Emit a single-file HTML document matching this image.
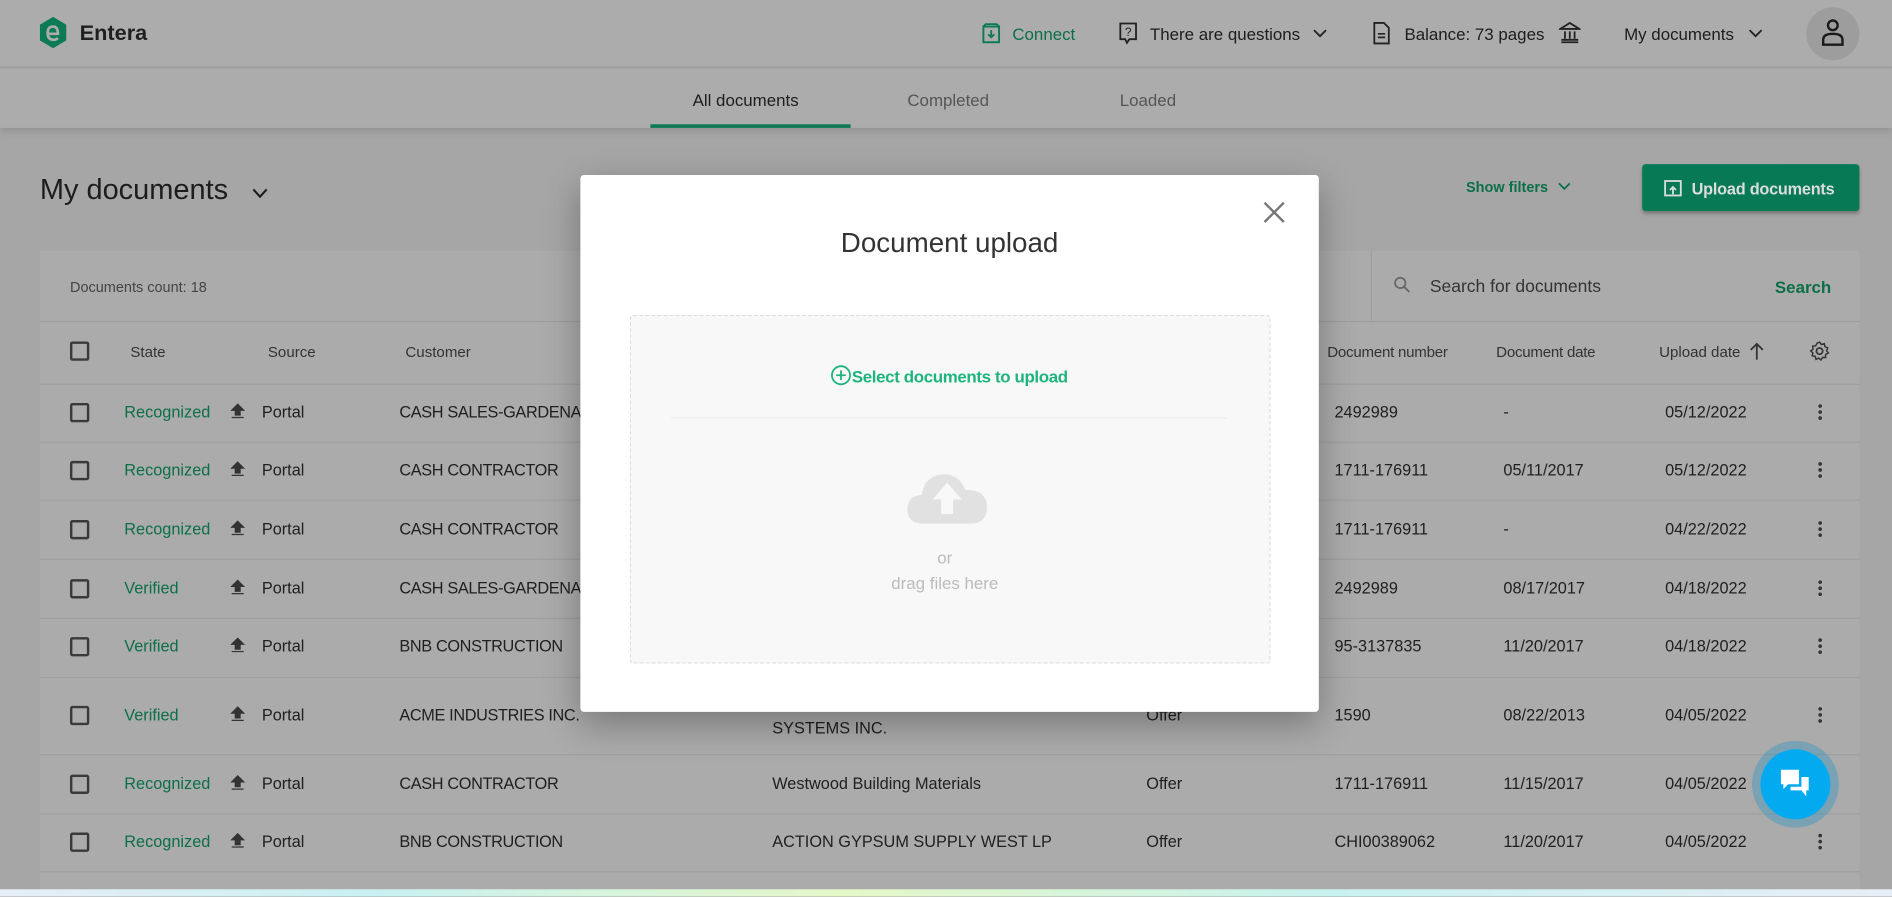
<!DOCTYPE html>
<html><head><meta charset="utf-8">
<style>
*{box-sizing:border-box;margin:0;padding:0}
html,body{width:1892px;height:897px;overflow:hidden;background:#a6a6a6;font-family:"Liberation Sans",sans-serif}
#w{position:absolute;left:0;top:0;width:1568px;height:743px;transform:scale(1.2066);transform-origin:0 0;background:#a6a6a6}
.a{position:absolute;white-space:nowrap}
.top{position:absolute;left:0;top:0;width:1568px;height:56px;background:#acacac;border-bottom:1px solid #9f9f9f}
.tabs{position:absolute;left:0;top:57px;width:1568px;height:49px;background:#acacac;box-shadow:0 3px 6px rgba(0,0,0,.12)}
.t14{font-size:14px;color:#1d1d1d}
.card{position:absolute;left:33px;top:208px;width:1508px;height:535px;background:#ababab}
.line{position:absolute;left:33px;width:1508px;height:1px;background:#9e9e9e}
.cb{position:absolute;left:58px;width:16px;height:16px;border:2px solid #3a3a3a;border-radius:2px}
.row{font-size:13.5px;color:#1f1f1f}
.g{color:#0c6f49}
.hd{font-size:12.5px;color:#333}
.dots{position:absolute;left:1507px;width:3px}
.dots i{display:block;width:3px;height:3px;border-radius:50%;background:#333;margin-bottom:2px}
</style></head><body><div id="w">
<div class="top"></div>
<svg class="a" style="left:33px;top:14px" width="22" height="26" viewBox="0 0 22 26"><path d="M11 0 L22 6.5 V19.5 L11 26 L0 19.5 V6.5Z" fill="#0b7a55"/><path d="M7 14 H15 Q15 8 11 8 Q6.5 8 6.5 13.5 Q6.5 19 11.5 19 Q13.5 19 15 17.5" fill="none" stroke="#acacac" stroke-width="2.2"/></svg>
<div class="a" style="left:66px;top:17px;font-size:18px;font-weight:bold;color:#1f1f1f">Entera</div>
<svg class="a" style="left:814px;top:19px" width="15" height="17" viewBox="0 0 15 17"><rect x="1" y="3" width="13" height="13" fill="none" stroke="#0b7a55" stroke-width="1.6"/><path d="M1 3 L3 1 H12 L14 3 M7.5 6 V12 M5 9.5 L7.5 12 L10 9.5" fill="none" stroke="#0b7a55" stroke-width="1.5"/></svg>
<div class="a t14" style="left:839px;top:20px;color:#0c6f49">Connect</div>
<svg class="a" style="left:927px;top:18px" width="16" height="19" viewBox="0 0 16 19"><path d="M1.5 1.5 H14.5 V14.5 H9 L7 17.5 L5.5 14.5 H1.5Z" fill="none" stroke="#222" stroke-width="1.5"/><text x="8" y="12" font-size="10" text-anchor="middle" fill="#222" font-family="Liberation Sans">?</text></svg>
<div class="a t14" style="left:953px;top:20px">There are questions</div>
<svg class="a" style="left:1088px;top:24px" width="12" height="8"><path d="M1 1 L6 6 L11 1" fill="none" stroke="#222" stroke-width="1.5"/></svg>
<svg class="a" style="left:1138px;top:18px" width="14" height="19" viewBox="0 0 14 19"><path d="M1 1 H9 L13 5 V18 H1Z" fill="none" stroke="#222" stroke-width="1.5"/><path d="M4 10 H10 M4 13 H10" stroke="#222" stroke-width="1.4"/></svg>
<div class="a t14" style="left:1164px;top:20px">Balance: 73 pages</div>
<svg class="a" style="left:1292px;top:18px" width="18" height="18" viewBox="0 0 18 18"><path d="M1 6 L9 1 L17 6Z M2 17 H16 M5 8 V14 M9 8 V14 M13 8 V14 M2 15 H16" fill="none" stroke="#222" stroke-width="1.5"/></svg>
<div class="a t14" style="left:1346px;top:20px">My documents</div>
<svg class="a" style="left:1449px;top:24px" width="12" height="8"><path d="M1 1 L6 6 L11 1" fill="none" stroke="#222" stroke-width="1.5"/></svg>
<div class="a" style="left:1497px;top:6px;width:44px;height:44px;border-radius:50%;background:#9d9d9d"></div>
<svg class="a" style="left:1509px;top:15px" width="20" height="24" viewBox="0 0 20 24"><circle cx="10" cy="6" r="4" fill="none" stroke="#1a1a1a" stroke-width="2"/><path d="M2 22 V18 Q2 13 10 13 Q18 13 18 18 V22Z" fill="none" stroke="#1a1a1a" stroke-width="2"/></svg>

<div class="tabs"></div>
<div class="a" style="left:574px;top:75px;font-size:14px;color:#1d1d1d">All documents</div>
<div class="a" style="left:539px;top:103px;width:166px;height:3px;background:#0b7a55"></div>
<div class="a" style="left:752px;top:75px;font-size:14px;color:#555">Completed</div>
<div class="a" style="left:928px;top:75px;font-size:14px;color:#555">Loaded</div>

<div class="a" style="left:33px;top:144px;font-size:24px;color:#1d1d1d">My documents</div>
<svg class="a" style="left:209px;top:156px" width="13" height="9"><path d="M1 1 L6.5 7 L12 1" fill="none" stroke="#1d1d1d" stroke-width="1.8"/></svg>
<div class="a" style="left:1215px;top:148px;font-size:12px;font-weight:bold;color:#0c6f49">Show filters</div>
<svg class="a" style="left:1291px;top:151px" width="11" height="7"><path d="M1 1 L5.5 5.5 L10 1" fill="none" stroke="#0c6f49" stroke-width="1.5"/></svg>
<div class="a" style="left:1361px;top:136px;width:180px;height:39px;background:#077a55;border-radius:3px;box-shadow:0 2px 3px rgba(0,0,0,.25)"></div>
<svg class="a" style="left:1379px;top:149px" width="15" height="14" viewBox="0 0 15 14"><rect x="1" y="1" width="13" height="12" fill="none" stroke="#ddd" stroke-width="1.5"/><path d="M7.5 12 V6 M5 8.5 L7.5 6 L10 8.5" fill="none" stroke="#ddd" stroke-width="1.5"/></svg>
<div class="a" style="left:1402px;top:149px;font-size:13.5px;font-weight:bold;color:#ddd;letter-spacing:-0.2px">Upload documents</div>

<div class="card"></div>
<div class="a" style="left:58px;top:231px;font-size:12px;color:#444">Documents count: 18</div>
<div class="a" style="left:1136px;top:208px;width:1px;height:58px;background:#9e9e9e"></div>
<svg class="a" style="left:1155px;top:229px" width="14" height="14"><circle cx="5.5" cy="5.5" r="4.3" fill="none" stroke="#666" stroke-width="1.4"/><path d="M8.7 8.7 L13 13" stroke="#666" stroke-width="1.5"/></svg>
<div class="a" style="left:1185px;top:230px;font-size:14.5px;color:#333">Search for documents</div>
<div class="a" style="left:1471px;top:230px;font-size:14px;font-weight:bold;color:#0c6f49">Search</div>
<div class="line" style="top:266px"></div>
<div class="cb" style="top:283px"></div>
<div class="a hd" style="left:108px;top:285px">State</div>
<div class="a hd" style="left:222px;top:285px">Source</div>
<div class="a hd" style="left:336px;top:285px">Customer</div>
<div class="a hd" style="left:1100px;top:285px;letter-spacing:-0.2px">Document number</div>
<div class="a hd" style="left:1240px;top:285px;letter-spacing:-0.2px">Document date</div>
<div class="a hd" style="left:1375px;top:285px">Upload date</div>
<svg class="a" style="left:1449px;top:283px" width="14" height="16"><path d="M7 15 V2 M2 7 L7 2 L12 7" fill="none" stroke="#333" stroke-width="1.5"/></svg>
<svg class="a" style="left:1499px;top:282px" width="18" height="18" viewBox="0 0 18 18"><circle cx="9" cy="9" r="2.6" fill="none" stroke="#333" stroke-width="1.4"/><path d="M9 1.5 L10.5 3.5 L13 2.8 L13.4 5.3 L15.8 6.2 L14.8 8.6 L16.3 10.6 L14 11.8 L14 14.3 L11.5 14.2 L10.2 16.4 L8.3 14.8 L6 15.8 L5.4 13.3 L2.9 12.9 L3.5 10.5 L1.7 8.8 L3.7 7.3 L3.3 4.8 L5.8 4.6 L6.9 2.4 Z" fill="none" stroke="#333" stroke-width="1.2"/></svg>
<div class="line" style="top:318px"></div>

<div id="rows"></div>
<script>
var R=[[342,"Recognized","CASH SALES-GARDENA","","","2492989","-","05/12/2022"],
[390,"Recognized","CASH CONTRACTOR","","","1711-176911","05/11/2017","05/12/2022"],
[439,"Recognized","CASH CONTRACTOR","","","1711-176911","-","04/22/2022"],
[488,"Verified","CASH SALES-GARDENA","","","2492989","08/17/2017","04/18/2022"],
[536,"Verified","BNB CONSTRUCTION","","","95-3137835","11/20/2017","04/18/2022"],
[593,"Verified","ACME INDUSTRIES INC.","SYSTEMS INC.","Offer","1590","08/22/2013","04/05/2022"],
[650,"Recognized","CASH CONTRACTOR","Westwood Building Materials","Offer","1711-176911","11/15/2017","04/05/2022"],
[698,"Recognized","BNB CONSTRUCTION","ACTION GYPSUM SUPPLY WEST LP","Offer","CHI00389062","11/20/2017","04/05/2022"]];
var L=[366,414,463,512,561,625,674,722],h="";
R.forEach(function(r,i){var y=r[0],t=y-8;
h+='<div class="cb" style="top:'+(y-8)+'px"></div>';
h+='<div class="a row g" style="left:103px;top:'+t+'px">'+r[1]+'</div>';
h+='<svg class="a" style="left:191px;top:'+(y-8)+'px" width="12" height="14"><path d="M6 1 L11 6 H8 V10 H4 V6 H1Z M1 12 H11" fill="#333" stroke="#333" stroke-width="1"/></svg>';
h+='<div class="a row" style="left:217px;top:'+t+'px">Portal</div>';
h+='<div class="a row" style="left:331px;top:'+t+'px;letter-spacing:-0.3px">'+r[2]+'</div>';
var st=i==5?t+11:t;
if(r[3])h+='<div class="a row" style="left:640px;top:'+st+'px">'+r[3]+'</div>';
if(r[4])h+='<div class="a row" style="left:950px;top:'+t+'px">'+r[4]+'</div>';
h+='<div class="a row" style="left:1106px;top:'+t+'px">'+r[5]+'</div>';
h+='<div class="a row" style="left:1246px;top:'+t+'px">'+r[6]+'</div>';
h+='<div class="a row" style="left:1380px;top:'+t+'px">'+r[7]+'</div>';
h+='<div class="dots" style="top:'+(y-7)+'px"><i></i><i></i><i></i></div>';
h+='<div class="line" style="top:'+L[i]+'px"></div>';});
document.getElementById('rows').innerHTML=h;
</script>

<div class="a" style="left:0;top:737px;width:1568px;height:6px;background:linear-gradient(90deg,#e8eef5,#c9f1f1 20%,#e6f7c8 45%,#c8f2ee 70%,#e8eef5)"></div>

<div class="a" style="left:481px;top:145px;width:612px;height:445px;background:#fff;border-radius:3px;box-shadow:0 10px 30px rgba(0,0,0,.3)"></div>
<svg class="a" style="left:1047px;top:167px" width="18" height="18"><path d="M1 1 L17 17 M17 1 L1 17" stroke="#777" stroke-width="2"/></svg>
<div class="a" style="left:481px;top:188px;width:612px;text-align:center;font-size:23px;color:#333">Document upload</div>
<div class="a" style="left:522px;top:261px;width:531px;height:289px;background:#f8f8f8;border:1px dashed #ddd;border-radius:3px"></div>
<svg class="a" style="left:688px;top:302px" width="18" height="18"><circle cx="9" cy="9" r="7.5" fill="none" stroke="#1db47d" stroke-width="1.5"/><path d="M9 5 V13 M5 9 H13" stroke="#1db47d" stroke-width="1.5"/></svg>
<div class="a" style="left:706px;top:304px;font-size:14px;font-weight:bold;color:#1db47d;letter-spacing:-0.3px">Select documents to upload</div>
<div class="a" style="left:556px;top:346px;width:461px;height:1px;background:#ececec"></div>
<svg class="a" style="left:751px;top:389px" width="68" height="46" viewBox="0 0 68 46"><path d="M14 45 Q1 45 1 33 Q1 22 13 21 Q15 5 31 4 Q44 4 49 17 Q67 17 67 31 Q67 45 53 45Z" fill="#e1e1e1"/><path d="M34 11 L46 25 H39 V37 H29 V25 H22Z" fill="#f8f8f8"/></svg>
<div class="a" style="left:477px;top:454px;width:612px;text-align:center;font-size:14px;color:#bbb">or</div>
<div class="a" style="left:477px;top:475px;width:612px;text-align:center;font-size:14px;color:#bbb">drag files here</div>

<div class="a" style="left:1452px;top:614px;width:72px;height:72px;border-radius:50%;background:rgba(60,150,190,.45)"></div>
<div class="a" style="left:1459px;top:621px;width:58px;height:58px;border-radius:50%;background:#03aaf0"></div>
<svg class="a" style="left:1474px;top:636px" width="28" height="28" viewBox="0 0 28 28"><path d="M2 2 H17 V14 H8 L4 18 V14 H2Z" fill="#fff"/><path d="M19 8 H25 V19 H23 V24 L19 19 H10 V16 H19Z" fill="#fff"/></svg>
</div></body></html>
